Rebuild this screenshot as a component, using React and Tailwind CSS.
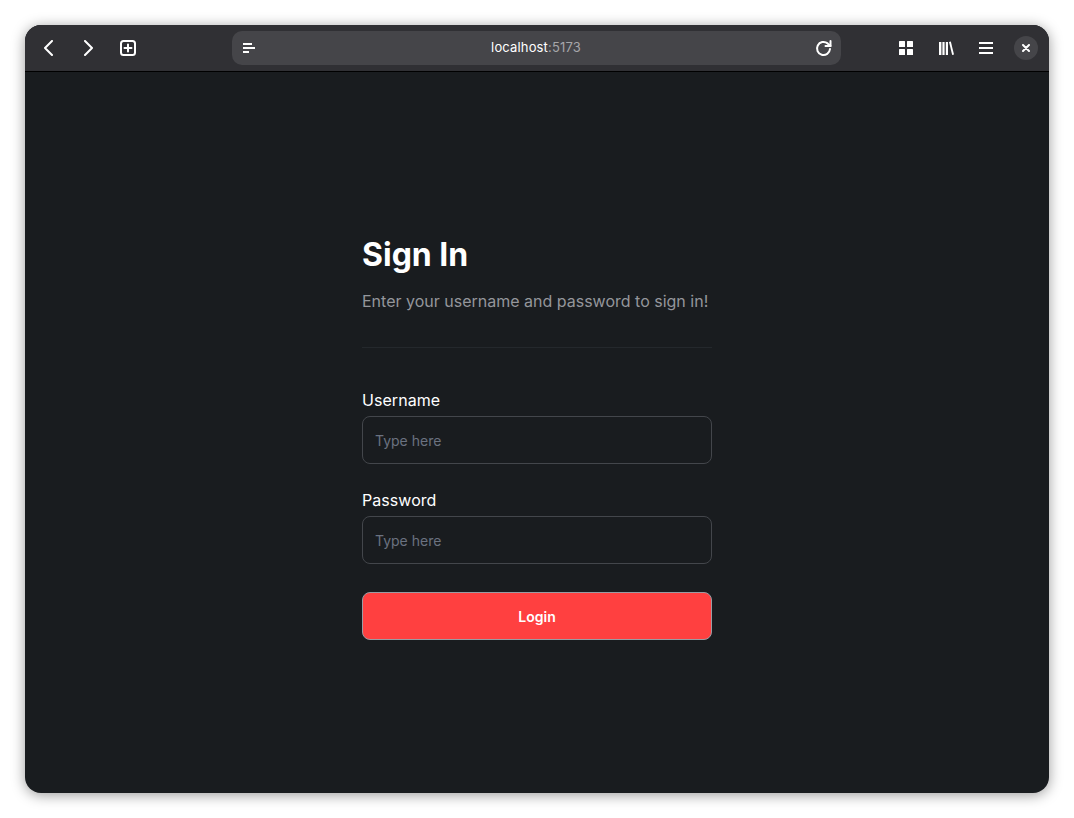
const Field = ({ label, type = "text" }) => (
  <div className="flex flex-col">
    <label className="h-6 mb-1 text-[16px] leading-6 font-normal tracking-[0.05px] text-white">{label}</label>
    <input
      type={type}
      placeholder="Type here"
      className="h-12 w-full px-3 rounded-lg border border-[#43464b] bg-transparent text-[14px] text-white outline-none placeholder:text-[#6b7280]"
    />
  </div>
);

const App = () => {
  return (
    <div className="w-[1074px] h-[818px] bg-white px-[25px] pt-[25px] font-['Inter',sans-serif] overflow-hidden">
      <div className="h-[768px] flex flex-col rounded-[16px] overflow-hidden bg-[#191c1f] shadow-[0_2px_14px_rgba(0,0,0,0.4)]">
        {/* browser bar */}
        <div className="h-[47px] shrink-0 flex items-center bg-[#303034] border-b border-black">
          <div className="w-[207px] flex items-center pl-[16px]">
            <svg width="14" height="16" viewBox="0 0 14 16" fill="none" stroke="white" strokeWidth="2" strokeLinecap="round" strokeLinejoin="round">
              <path d="M11 1 L4 8 L11 15" />
            </svg>
            <svg className="ml-[27px]" width="14" height="16" viewBox="0 0 14 16" fill="none" stroke="white" strokeWidth="2" strokeLinecap="round" strokeLinejoin="round">
              <path d="M3 1 L10 8 L3 15" />
            </svg>
            <svg className="ml-[24px]" width="16" height="16" viewBox="0 0 16 16" fill="none" stroke="white" strokeWidth="2" strokeLinecap="round">
              <rect x="1" y="1" width="14" height="14" rx="2.5" />
              <path d="M8 4.5 V11.5 M4.5 8 H11.5" />
            </svg>
          </div>
          <div className="relative w-[609px] h-[34px] flex items-center justify-between rounded-[10px] bg-[#454549] px-[11px]">
            <svg width="12" height="10" viewBox="0 0 12 10" fill="white">
              <rect x="0" y="0" width="9" height="2" />
              <rect x="0" y="4" width="12" height="2" />
              <rect x="0" y="8" width="6" height="2" />
            </svg>
            <span className="ml-[2px] text-[13px] tracking-[0.15px] text-white">
              localhost<span className="text-[#a6a6a9]">:5173</span>
            </span>
            <svg width="17" height="17" viewBox="0 0 17 17" fill="none" stroke="white" strokeWidth="2" strokeLinecap="round" strokeLinejoin="round" className="mr-[-2px]">
              <path d="M15 9 A6.5 6.5 0 1 1 12.6 3.4 L15.5 6" />
              <path d="M15.5 1 V6 H10.5" />
            </svg>
          </div>
          <div className="flex-1 flex items-center pl-[58px]">
            <svg width="14" height="14" viewBox="0 0 14 14" fill="white">
              <rect x="0" y="0" width="6" height="6" rx="0.5" />
              <rect x="8" y="0" width="6" height="6" rx="0.5" />
              <rect x="0" y="8" width="6" height="6" rx="0.5" />
              <rect x="8" y="8" width="6" height="6" rx="0.5" />
            </svg>
            <svg className="ml-[26px]" width="15" height="14" viewBox="0 0 15 14" fill="white">
              <rect x="0" y="1" width="2.4" height="13" />
              <rect x="3.4" y="1" width="2.2" height="13" />
              <rect x="6.8" y="1" width="2.2" height="13" />
              <path d="M10 1 L11.8 0.5 L15 13.5 L13.2 14 Z" />
            </svg>
            <svg className="ml-[25px]" width="14" height="12" viewBox="0 0 14 12" fill="white">
              <rect x="0" y="0" width="14" height="2" />
              <rect x="0" y="5" width="14" height="2" />
              <rect x="0" y="10" width="14" height="2" />
            </svg>
            <div className="ml-[21px] w-6 h-6 flex items-center justify-center rounded-full bg-[#454549]">
              <svg width="8" height="8" viewBox="0 0 8 8" fill="none" stroke="white" strokeWidth="2" strokeLinecap="round">
                <path d="M1 1 L7 7 M7 1 L1 7" />
              </svg>
            </div>
          </div>
        </div>

        {/* login form */}
        <div className="flex-1 flex justify-center">
          <div className="w-[350px] pt-[163px]">
            <h1 className="text-[32px] leading-[40px] font-bold text-white">Sign In</h1>
            <p className="mt-[14px] text-[16px] leading-6 text-[#94969b]">Enter your username and password to sign in!</p>
            <hr className="mt-[34px] border-[#24282c]" />
            <div className="mt-[40px] flex flex-col gap-6">
              <Field label="Username" />
              <Field label="Password" type="password" />
            </div>
            <button className="mt-[28px] w-full h-12 rounded-lg border border-[#9a9ca3] bg-[#ff4040] text-[14px] font-semibold text-white">
              Login
            </button>
          </div>
        </div>
      </div>
    </div>
  );
};

export default App;
